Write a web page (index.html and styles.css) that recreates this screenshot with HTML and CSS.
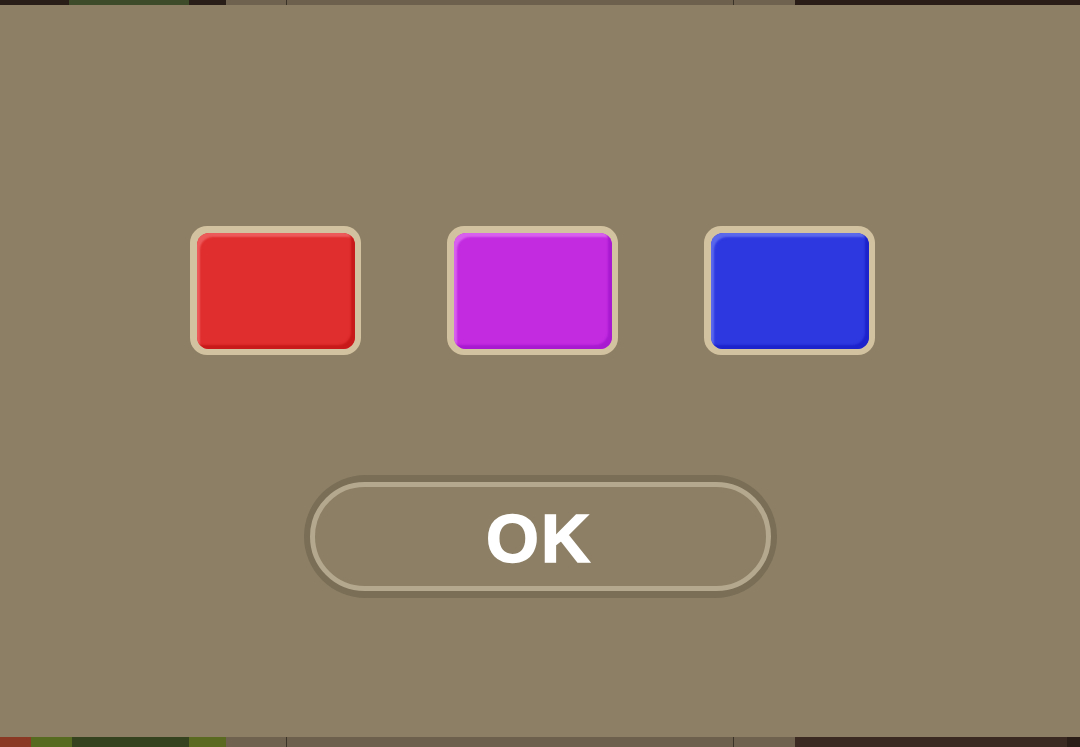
FILE: index.html
```html
<!DOCTYPE html>
<html>
<head>
<meta charset="utf-8">
<link rel="stylesheet" href="styles.css">
</head>
<body>
<div class="scene">
  <div class="col c1"></div>
  <div class="col c2"></div>
  <div class="col c3"></div>
  <div class="col c4"></div>
  <div class="col c5"></div>
  <div class="col c6"></div>
  <div class="col line"></div>
  <div class="col c7"></div>
  <div class="col line"></div>
  <div class="col c8"></div>
  <div class="col c9"></div>
  <div class="col c10"></div>
</div>
<div class="panel">
  <div class="swatches">
    <div class="swatch"><div class="swatch-inner red"></div></div>
    <div class="swatch"><div class="swatch-inner purple"></div></div>
    <div class="swatch"><div class="swatch-inner blue"></div></div>
  </div>
  <div class="ok-outer">
    <div class="ok-ring"><span class="ok-text">OK</span></div>
  </div>
</div>
</body>
</html>
```

FILE: styles.css
```css
html, body {
  margin: 0;
  padding: 0;
  width: 1080px;
  height: 747px;
  overflow: hidden;
  font-family: "Liberation Sans", Arial, sans-serif;
}
.scene {
  display: flex;
  width: 1080px;
  height: 747px;
}
.col { height: 100%; }
.c1 { width: 31px; background: linear-gradient(#2a1e18 50%, #8a3a24 50%); }
.c2 { width: 38px; background: linear-gradient(#2a1e18 50%, #566a20 50%); }
.c3 { width: 3px; background: linear-gradient(#3e4b2b 50%, #566a20 50%); }
.c4 { width: 117px; background: linear-gradient(#3e4b2b 50%, #36431f 50%); }
.c5 { width: 37px; background: linear-gradient(#2a1e18 50%, #5a6a20 50%); }
.c6 { width: 60px; background: #6f6350; }
.line { width: 1px; background: #3b3328; }
.c7 { width: 446px; background: #6d614e; }
.c8 { width: 61px; background: #6f6350; }
.c9 { width: 272px; background: linear-gradient(#2a1d17 50%, #3b2a21 50%); }
.c10 { width: 13px; background: #2a1d17; }

.panel {
  position: absolute;
  left: 0;
  top: 5px;
  width: 1080px;
  height: 732px;
  background: #8c7f65;
  display: flex;
  flex-direction: column;
  align-items: center;
}
.swatches {
  display: flex;
  gap: 86px;
  margin-top: 221px;
  margin-right: 15px;
}
.swatch {
  width: 171px;
  height: 129px;
  box-sizing: border-box;
  padding: 7px 6px 6px 7px;
  border-radius: 17px;
  background: #d3c2a0;
}
.swatch-inner {
  height: 100%;
  border-radius: 12px;
}
.red {
  background: #e02d2d;
  box-shadow: inset -5px -5px 2px -1px #c81a1a, inset 4px 5px 2px -1px #ec5a5a;
}
.purple {
  background: #c22be0;
  box-shadow: inset -5px -5px 2px -1px #a81ad0, inset 4px 5px 2px -1px #d860ee;
}
.blue {
  background: #2e38e0;
  box-shadow: inset -5px -5px 2px -1px #1c22cc, inset 4px 5px 2px -1px #5a68ec;
}
.ok-outer {
  margin-top: 120px;
  width: 473px;
  height: 123px;
  box-sizing: border-box;
  padding: 7px 6px;
  border-radius: 62px;
  background: #7a6e57;
}
.ok-ring {
  height: 100%;
  box-sizing: border-box;
  border: 5px solid #b4a88e;
  border-radius: 56px;
  background: #8c7f65;
  display: flex;
  align-items: center;
  justify-content: center;
}
.ok-text {
  color: #ffffff;
  font-weight: bold;
  font-size: 68px;
  line-height: 1;
  letter-spacing: 2px;
  -webkit-text-stroke: 1.5px #ffffff;
  margin-right: 2px;
  margin-top: 2px;
}
```
